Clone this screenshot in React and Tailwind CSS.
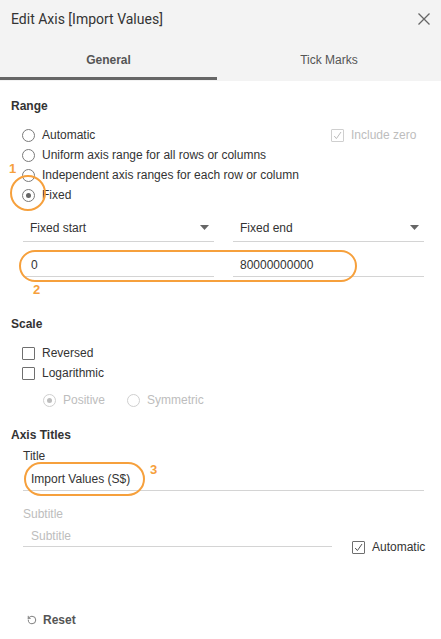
import React from "react";
import { RotateCcw } from "lucide-react";

const Radio = ({ checked, disabled }) => (
  <span
    className={`w-[13px] h-[13px] rounded-full border flex items-center justify-center bg-white shrink-0 ${
      disabled ? "border-[#cfcfcf]" : "border-[#7a7a7a]"
    }`}
  >
    {checked && (
      <span
        className={`w-[5px] h-[5px] rounded-full ${
          disabled ? "bg-[#bdbdbd]" : "bg-[#666]"
        }`}
      />
    )}
  </span>
);

const Checkbox = ({ checked, disabled }) => (
  <span
    className={`w-[13px] h-[13px] border rounded-[1px] flex items-center justify-center bg-white shrink-0 ${
      disabled ? "border-[#cfcfcf]" : "border-[#6f6f6f]"
    }`}
  >
    {checked && (
      <svg width="9" height="9" viewBox="0 0 9 9">
        <path
          d="M1.2 5 L3.4 7.6 L8 1"
          fill="none"
          stroke={disabled ? "#bdbdbd" : "#555"}
          strokeWidth="1"
        />
      </svg>
    )}
  </span>
);

const RadioRow = ({ label, checked, children }) => (
  <div className="h-[20px] flex items-center pl-[22px]">
    <Radio checked={checked} />
    <span className="ml-[7px] text-[#333]">{label}</span>
    {children}
  </div>
);

const Dropdown = ({ label }) => (
  <div className="w-[191px] h-[28px] border-b border-[#d4d4d4] flex items-center justify-between pl-[7px] pr-[5px]">
    <span className="text-[#333]">{label}</span>
    <svg width="9" height="5" viewBox="0 0 9 5">
      <path d="M0 0 L9 0 L4.5 5 Z" fill="#666" />
    </svg>
  </div>
);

const App = () => {
  return (
    <div className="w-[441px] h-[639px] bg-white relative overflow-hidden font-['Liberation_Sans',Arial,sans-serif] text-[12px] text-[#333] leading-[14px]">
      {/* header */}
      <div className="bg-[#f3f3f3] h-[81px]">
        <div className="h-[37px] flex items-center justify-between pl-[11px] pr-[11px]">
          <span className="font-['Roboto',sans-serif] text-[14px] text-[#333]">
            Edit Axis [Import Values]
          </span>
          <svg width="12" height="12" viewBox="0 0 12 12">
            <path d="M0.5 0.5 L11.5 11.5 M11.5 0.5 L0.5 11.5" stroke="#666" strokeWidth="1.3" />
          </svg>
        </div>
        <div className="h-[44px] flex">
          <div className="w-[217px] flex flex-col">
            <div className="flex-1 flex items-center justify-center pt-[6px] font-bold text-[#555]">
              General
            </div>
            <div className="h-[3px] bg-[#666]" />
            <div className="h-[1px]" />
          </div>
          <div className="flex-1 flex flex-col">
            <div className="flex-1 flex items-center justify-center pt-[6px] text-[#555]">
              Tick Marks
            </div>
            <div className="h-[4px]" />
          </div>
        </div>
      </div>

      {/* body */}
      <div className="pt-[18px]">
        <div className="pl-[11px] font-bold">Range</div>

        <div className="mt-[12px]">
          <div className="h-[20px] flex items-center pl-[22px] relative">
            <Radio />
            <span className="ml-[7px]">Automatic</span>
            <div className="absolute left-[331px] top-0 h-[20px] flex items-center">
              <Checkbox checked disabled />
              <span className="ml-[7px] text-[#bdbdbd]">Include zero</span>
            </div>
          </div>
          <RadioRow label="Uniform axis range for all rows or columns" />
          <RadioRow label="Independent axis ranges for each row or column" />
          <RadioRow label="Fixed" checked />
        </div>

        <div className="mt-[9px] pl-[23px] flex gap-[19px]">
          <Dropdown label="Fixed start" />
          <Dropdown label="Fixed end" />
        </div>

        <div className="mt-[12px] pl-[23px] flex gap-[19px]">
          <div className="w-[191px] h-[23px] border-b border-[#d4d4d4] flex items-center pl-[8px]">0</div>
          <div className="w-[191px] h-[23px] border-b border-[#d4d4d4] flex items-center pl-[7px]">80000000000</div>
        </div>

        <div className="mt-[40px] pl-[11px] font-bold">Scale</div>

        <div className="mt-[12px]">
          <div className="h-[20px] flex items-center pl-[22px]">
            <Checkbox />
            <span className="ml-[7px]">Reversed</span>
          </div>
          <div className="h-[20px] flex items-center pl-[22px]">
            <Checkbox />
            <span className="ml-[7px]">Logarithmic</span>
          </div>
        </div>

        <div className="mt-[7px] h-[20px] flex items-center pl-[43px] text-[#bdbdbd]">
          <Radio checked disabled />
          <span className="ml-[7px]">Positive</span>
          <span className="ml-[22px]">
            <Radio disabled />
          </span>
          <span className="ml-[7px]">Symmetric</span>
        </div>

        <div className="mt-[18px] pl-[11px] font-bold">Axis Titles</div>
        <div className="mt-[7px] pl-[23px]">Title</div>
        <div className="mt-[4px] ml-[23px] w-[401px] h-[24px] border-b border-[#d4d4d4] flex items-center pl-[8px]">
          Import Values (S$)
        </div>
        <div className="mt-[16px] pl-[23px] text-[#bdbdbd]">Subtitle</div>
        <div className="mt-[4px] pl-[23px] flex items-end">
          <div className="w-[309px] h-[22px] border-b border-[#d4d4d4] flex items-center pl-[8px] text-[#bdbdbd]">
            Subtitle
          </div>
          <div className="ml-[20px] h-[14px] flex items-center translate-y-[7px]">
            <Checkbox checked />
            <span className="ml-[7px]">Automatic</span>
          </div>
        </div>

        <div className="mt-[66px] pl-[27px] flex items-center h-[14px]">
          <RotateCcw size={10} strokeWidth={2} color="#666" />
          <span className="ml-[6px] font-bold text-[#555]">Reset</span>
        </div>
      </div>

      {/* annotations */}
      <span className="absolute left-[9px] top-[162px] text-[13px] font-bold text-[#f6a03c]">1</span>
      <div className="absolute left-[10px] top-[175px] w-[36px] h-[36px] rounded-full border-[2.5px] border-[#f6a03c]" />
      <div className="absolute left-[19px] top-[250px] w-[338px] h-[32px] rounded-full border-[2.5px] border-[#f6a03c]" />
      <span className="absolute left-[33px] top-[283px] text-[13px] font-bold text-[#f6a03c]">2</span>
      <div className="absolute left-[24px] top-[462px] w-[121px] h-[34px] rounded-full border-[2.5px] border-[#f6a03c]" />
      <span className="absolute left-[150px] top-[463px] text-[13px] font-bold text-[#f6a03c]">3</span>
    </div>
  );
};

export default App;
